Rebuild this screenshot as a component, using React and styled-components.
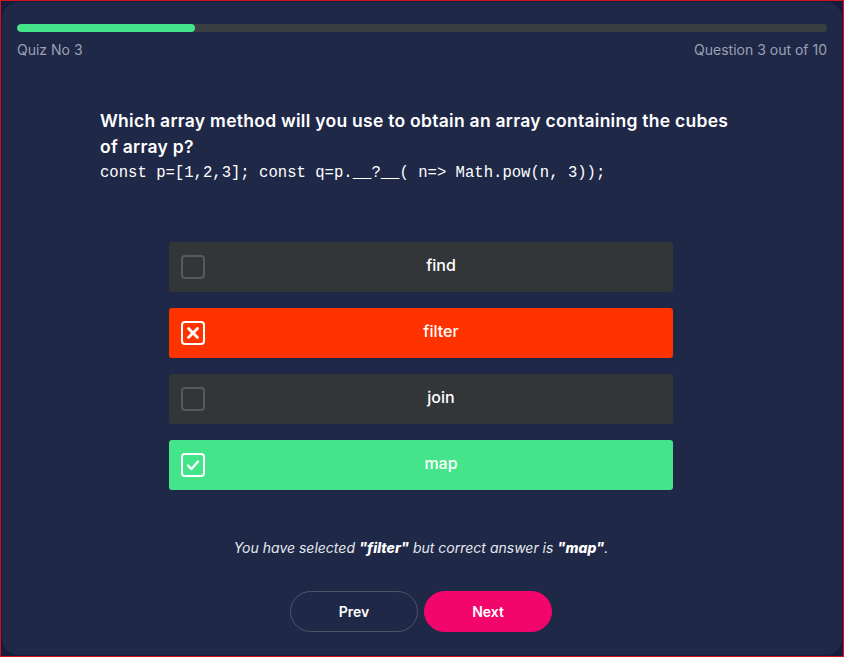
import React from "react";
import styled, { createGlobalStyle } from "styled-components";

const GlobalStyle = createGlobalStyle`
  * { box-sizing: border-box; }
  body {
    margin: 0;
    font-family: Inter, "Open Sans", sans-serif;
    background: #151c3d;
  }
`;

const Frame = styled.div`
  width: 844px;
  height: 657px;
  border: 1px solid #d0141c;
  padding: 1px;
  background: #151c3d;
`;

const Card = styled.main`
  height: 100%;
  background: #1f2847;
  border-radius: 16px;
  padding: 22px 15px 0;
  display: flex;
  flex-direction: column;
`;

const Track = styled.div`
  height: 8px;
  border-radius: 4px;
  background: #393e40;
  overflow: hidden;
`;

const Fill = styled.div`
  height: 100%;
  border-radius: 4px;
  background: #44e48a;
`;

const Meta = styled.div`
  display: flex;
  justify-content: space-between;
  margin-top: 8px;
  font-size: 14px;
  line-height: 20px;
  color: #9ba1b3;
`;

const Question = styled.section`
  width: 644px;
  margin: 48px auto 0;
  color: #fff;
`;

const Title = styled.h2`
  margin: 0;
  font-size: 17.5px;
  font-weight: 600;
  line-height: 26px;
  letter-spacing: 0.27px;
`;

const Code = styled.pre`
  margin: 0;
  font-family: "Liberation Mono", "DejaVu Sans Mono", monospace;
  font-size: 15.6px;
  line-height: 26px;
`;

const Body = styled.div`
  padding-right: 2px;
  display: flex;
  flex-direction: column;
`;

const Options = styled.ul`
  list-style: none;
  padding: 0;
  width: 504px;
  margin: 56px auto 0;
  display: flex;
  flex-direction: column;
  gap: 16px;
`;

const optionColors = {
  idle: "#333638",
  wrong: "#ff3300",
  right: "#44e48a",
};

const Option = styled.li`
  height: 50px;
  border-radius: 3px;
  background: ${(p) => optionColors[p.state]};
  display: flex;
  align-items: center;
  gap: 4px;
  padding: 0 0 0 12px;
  color: #fff;
  font-size: 16px;
  font-weight: 500;
`;

const Label = styled.span`
  flex: 1;
  text-align: center;
  padding-bottom: 5px;
`;

const Box = styled.span`
  width: 24px;
  height: 24px;
  border-radius: 4px;
  border: 2px solid ${(p) => (p.state === "idle" ? "#57595c" : "#fff")};
  display: flex;
  align-items: center;
  justify-content: center;
`;

const Feedback = styled.p`
  margin: 49px 0 0;
  text-align: center;
  font-size: 14px;
  font-style: italic;
  color: #e6e8ef;
  b {
    font-weight: 800;
    color: #fff;
  }
`;

const Buttons = styled.div`
  display: flex;
  justify-content: center;
  gap: 6px;
  margin-top: 35px;
`;

const Button = styled.button`
  width: 128px;
  height: 41px;
  border-radius: 21px;
  border: 1px solid ${(p) => (p.primary ? "#f2066b" : "#4d5468")};
  background: ${(p) => (p.primary ? "#f2066b" : "transparent")};
  color: #fff;
  font-family: inherit;
  font-size: 14px;
  font-weight: 600;
`;

const Mark = ({ state }) => {
  if (state === "wrong")
    return (
      <svg width="16" height="16" viewBox="0 0 16 16">
        <path d="M3.5 3.5 L12.5 12.5 M12.5 3.5 L3.5 12.5" stroke="#fff" strokeWidth="2.8" strokeLinecap="round" />
      </svg>
    );
  if (state === "right")
    return (
      <svg width="16" height="16" viewBox="0 0 16 16">
        <path d="M3 8.5 L6.5 12 L13 4.5" stroke="#fff" strokeWidth="2.4" fill="none" strokeLinecap="round" strokeLinejoin="round" />
      </svg>
    );
  return null;
};

const options = [
  { label: "find", state: "idle" },
  { label: "filter", state: "wrong" },
  { label: "join", state: "idle" },
  { label: "map", state: "right" },
];

export default function App() {
  const progress = 22;
  return (
    <Frame>
      <GlobalStyle />
      <Card>
        <Track>
          <Fill style={{ width: `${progress}%` }} />
        </Track>
        <Meta>
          <span>Quiz No 3</span>
          <span>Question 3 out of 10</span>
        </Meta>
        <Question>
          <Title>
            Which array method will you use to obtain an array containing the cubes of array p?
          </Title>
          <Code>const p=[1,2,3]; const q=p.__?__( n=&gt; Math.pow(n, 3));</Code>
        </Question>
        <Body>
          <Options>
            {options.map((o) => (
              <Option key={o.label} state={o.state}>
                <Box state={o.state}>
                  <Mark state={o.state} />
                </Box>
                <Label>{o.label}</Label>
              </Option>
            ))}
          </Options>
          <Feedback>
            You have selected <b>"filter"</b> but correct answer is <b>"map"</b>.
          </Feedback>
          <Buttons>
            <Button>Prev</Button>
            <Button primary>Next</Button>
          </Buttons>
        </Body>
      </Card>
    </Frame>
  );
}
